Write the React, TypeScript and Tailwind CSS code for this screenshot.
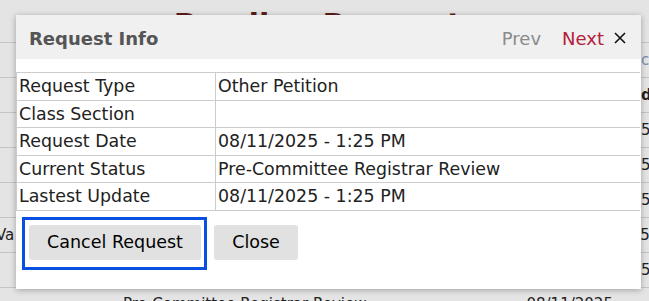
import React from 'react';

const rows = [
  ['Request Type', 'Other Petition'],
  ['Class Section', ''],
  ['Request Date', '08/11/2025 - 1:25 PM'],
  ['Current Status', 'Pre-Committee Registrar Review'],
  ['Lastest Update', '08/11/2025 - 1:25 PM'],
];

function RequestInfoDialog() {
  return (
    <div className="absolute left-[16px] top-[15px] w-[625px] h-[274px] bg-white shadow-[0_1px_6px_rgba(0,0,0,0.3)] flex flex-col">
      <div className="h-[44px] bg-[#f0f0f0] flex items-center justify-between pl-[13px] pr-[15px]">
        <h3 className="text-[18px] font-bold text-[#555555] pt-[2px]">Request Info</h3>
        <div className="flex items-center text-[18px] pt-[2px]">
          <span className="text-[#8a8a8a]">Prev</span>
          <span className="ml-[21px] text-[#b3203a]">Next</span>
          <svg className="ml-[10px]" width="12" height="12" viewBox="0 0 12 12">
            <path d="M1 1L11 11M11 1L1 11" stroke="#111111" strokeWidth="1.6" />
          </svg>
        </div>
      </div>
      <div className="mt-[13px] border-t border-l border-[#cccccc] w-[624px]">
        {rows.map(([k, v]) => (
          <div key={k} className="grid grid-cols-[199px_1fr] h-[27.5px] border-b border-[#cccccc] text-[17.4px] text-[#222222]">
            <div className="border-r border-[#cccccc] pl-[2px] flex items-center">{k}</div>
            <div className="pl-[2px] flex items-center">{v}</div>
          </div>
        ))}
      </div>
      <div className="flex items-start mt-[6.5px] ml-[6px]">
        <div className="border-[3px] border-[#0a50e0] pl-[4px] pr-[3px] pt-[5px] pb-[7px]">
          <button className="w-[172px] h-[35px] bg-[#e1e1e1] rounded-[3px] text-[17.5px] text-black">Cancel Request</button>
        </div>
        <button className="ml-[7px] mt-[8px] w-[84px] h-[35px] bg-[#e1e1e1] rounded-[3px] text-[17.5px] text-black">Close</button>
      </div>
    </div>
  );
}

export default function App() {
  return (
    <div className="relative w-[649px] h-[301px] overflow-hidden bg-[#e4e4e4] font-['DejaVu_Sans',sans-serif]">
      <div className="pt-[7px] text-center text-[30px] font-bold leading-[36px] text-[#5b1d1a] pl-[4px]">Pending Requests</div>
      <div className="mt-[-1px] text-[15px] text-[#222222] border-t border-[#c4c4c4]">
        <div className="h-[35px] border-b border-[#c4c4c4] flex items-center">
          <span className="ml-[641px] text-[#7a8fb0] whitespace-nowrap">ch</span>
        </div>
        <div className="h-[35px] border-b border-[#c4c4c4] flex items-center">
          <span className="ml-[641px] font-bold whitespace-nowrap">d</span>
        </div>
        <div className="h-[35px] border-b border-[#c4c4c4] flex items-center">
          <span className="ml-[641px] whitespace-nowrap">5</span>
        </div>
        <div className="h-[35px] border-b border-[#c4c4c4] flex items-center">
          <span className="ml-[641px] whitespace-nowrap">5</span>
        </div>
        <div className="h-[35px] border-b border-[#c4c4c4] flex items-center">
          <span className="ml-[641px] whitespace-nowrap">5</span>
        </div>
        <div className="h-[35px] border-b border-[#c4c4c4] flex items-center">
          <span className="ml-[-4px] whitespace-nowrap">Va</span>
          <span className="ml-[626px] whitespace-nowrap">5</span>
        </div>
        <div className="h-[35px] border-b border-[#c4c4c4] flex items-center">
          <span className="ml-[641px] whitespace-nowrap">5</span>
        </div>
        <div className="h-[35px] border-b border-[#c4c4c4] flex items-start pt-[5px] whitespace-nowrap">
          <span className="ml-[123px]">Pre-Committee Registrar Review</span>
          <span className="ml-[160px]">08/11/2025</span>
        </div>
      </div>
      <RequestInfoDialog />
    </div>
  );
}
